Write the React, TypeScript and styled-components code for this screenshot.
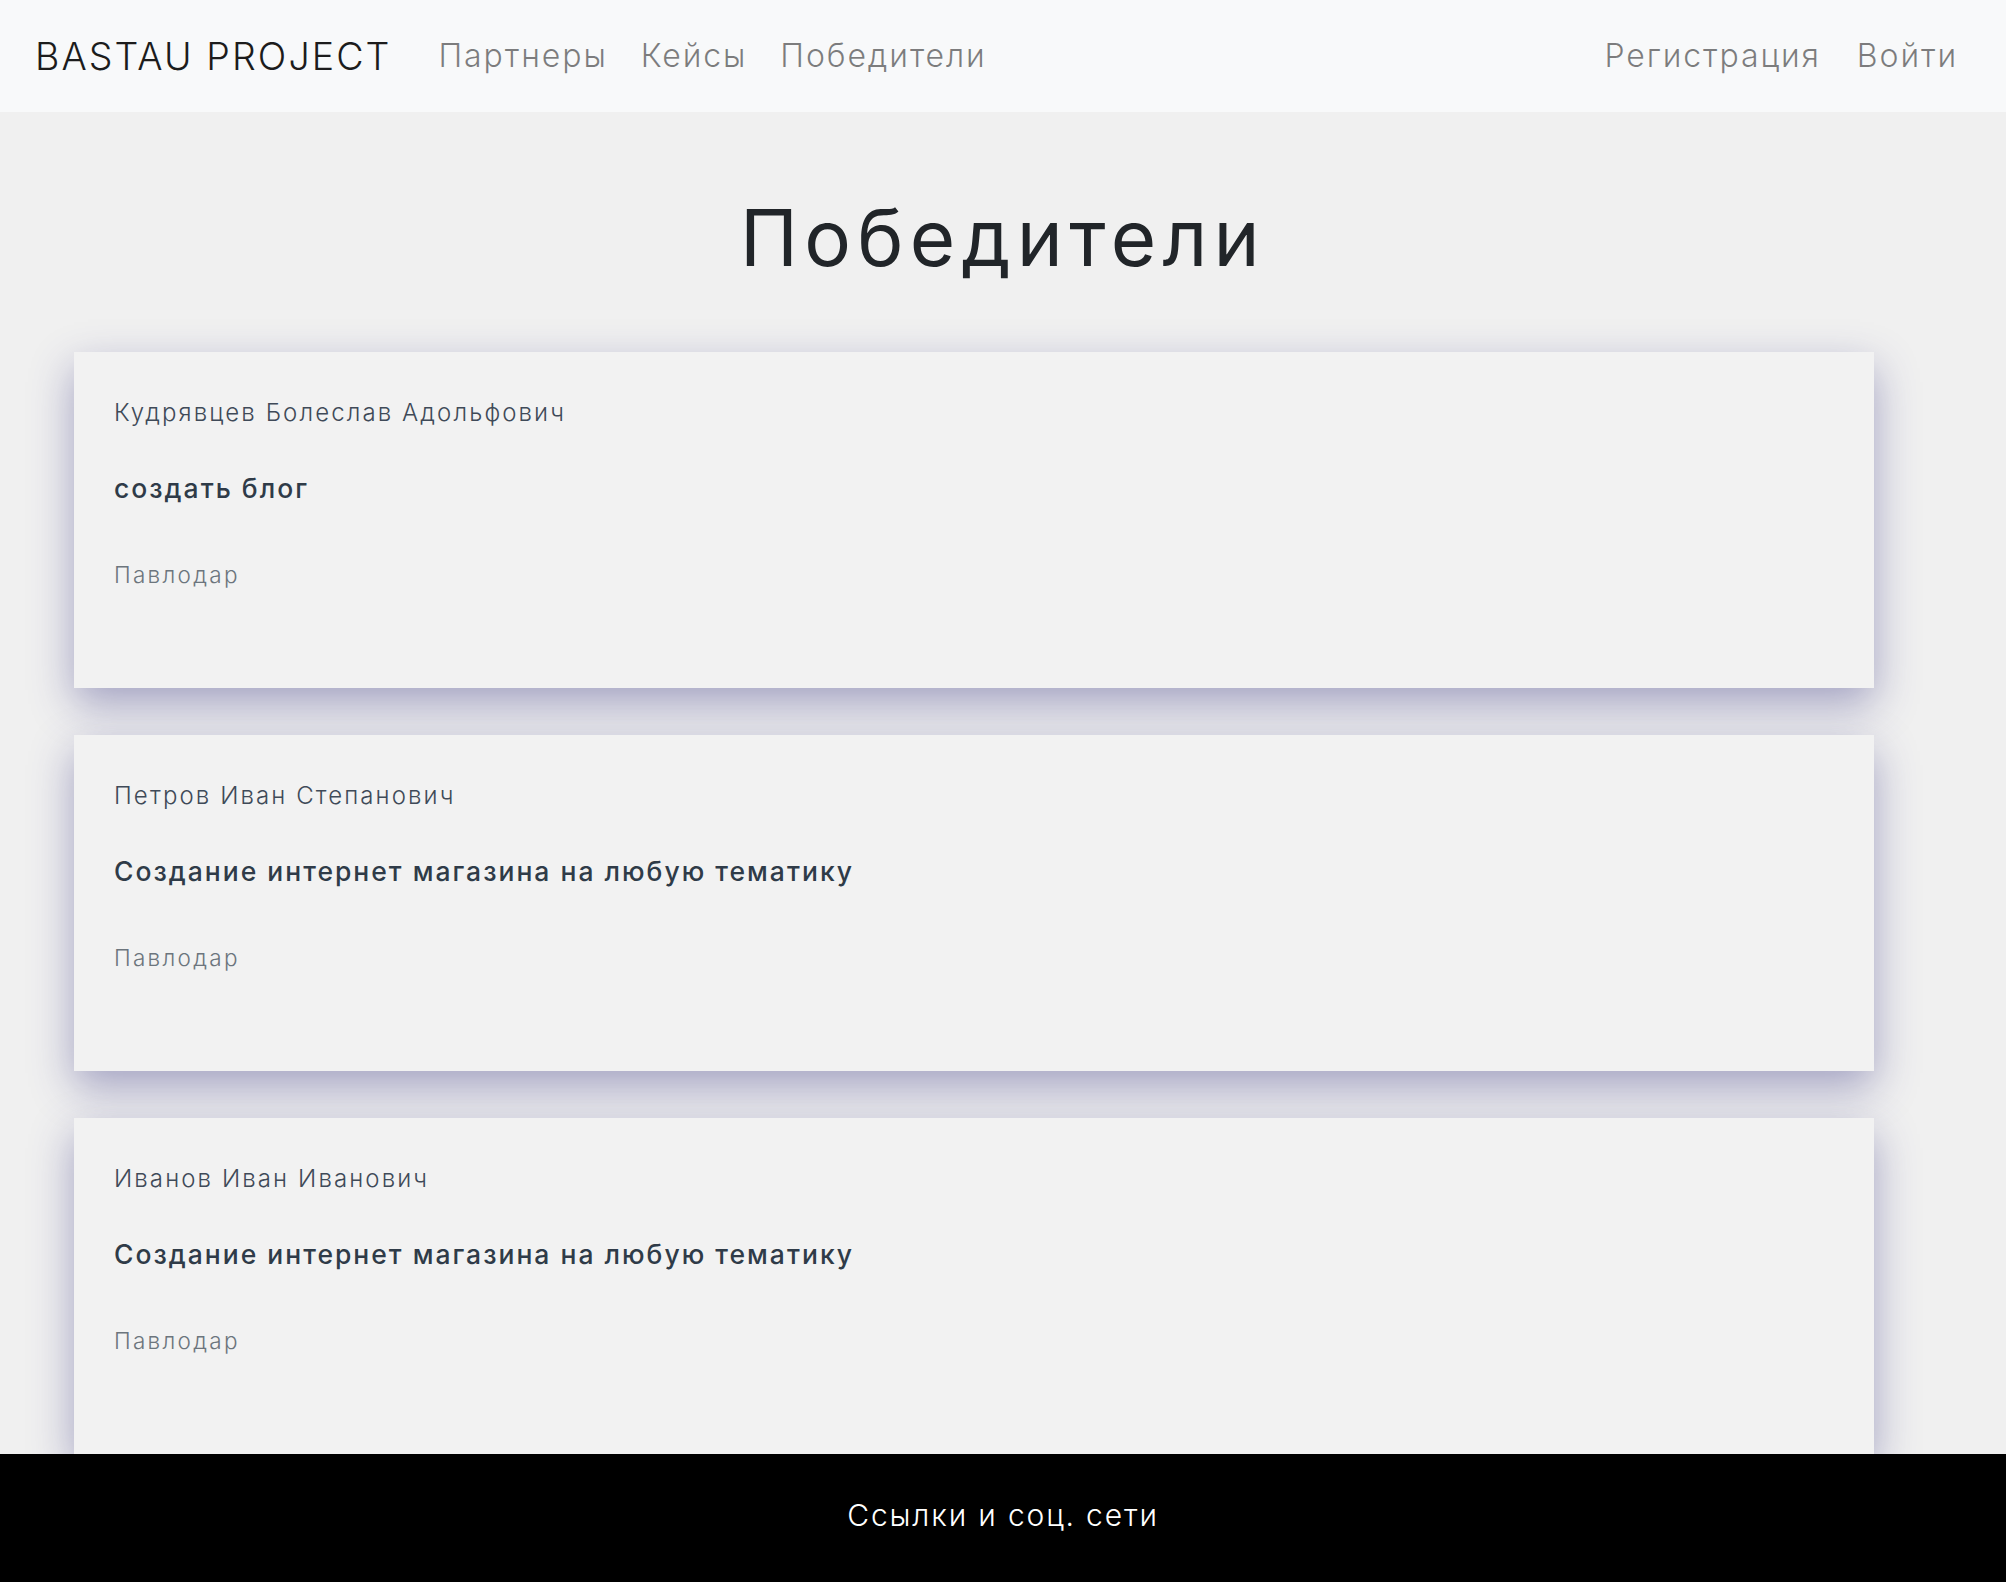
import React from "react";
import styled, { createGlobalStyle } from "styled-components";

const GlobalStyle = createGlobalStyle`
  * { box-sizing: border-box; }
  html, body { margin: 0; padding: 0; }
  body {
    background: #f0f0f0;
    font-family: "Inter", "Noto Sans", "DejaVu Sans", sans-serif;
    color: #212529;
  }
`;

const Page = styled.div`
  display: flex;
  flex-direction: column;
  min-height: 100vh;
`;

const Navbar = styled.nav`
  height: 112px;
  background: #f8f9fa;
  display: flex;
  align-items: center;
  padding: 0 48px 0 35px;
`;

const Brand = styled.a`
  font-size: 37.5px;
  font-weight: 300;
  line-height: 1.2;
  color: #1c1c1c;
  letter-spacing: 2.1px;
  margin-right: 47px;
  text-decoration: none;
  white-space: nowrap;
`;

const NavGroup = styled.div<{ $push?: boolean }>`
  display: flex;
  align-items: center;
  gap: ${(p) => (p.$push ? "36px" : "33px")};
  margin-left: ${(p) => (p.$push ? "auto" : "0")};
`;

const NavLink = styled.a`
  font-size: 32px;
  font-weight: 300;
  line-height: 1.5;
  color: rgba(0, 0, 0, 0.5);
  letter-spacing: 1.9px;
  text-decoration: none;
  white-space: nowrap;
`;

const Main = styled.main`
  flex: 1;
  display: flex;
  flex-direction: column;
`;

const Heading = styled.h1`
  margin: 80px 0 68px;
  text-align: center;
  font-size: 78px;
  font-weight: 400;
  line-height: 92px;
  letter-spacing: 6.3px;
  color: #212529;
`;

const CardList = styled.div`
  display: flex;
  flex-direction: column;
  gap: 47px;
  padding-left: 74px;
`;

const Card = styled.article`
  width: 1800px;
  background: #f2f2f2;
  padding: 43px 40px 96px;
  box-shadow: 0 16px 40px rgba(58, 54, 130, 0.42);
`;

const Name = styled.div`
  font-size: 24px;
  font-weight: 300;
  line-height: 36px;
  color: #3f4a58;
  letter-spacing: 2.1px;
`;

const Task = styled.div`
  margin-top: 37px;
  font-size: 26.5px;
  font-weight: 500;
  line-height: 40px;
  color: #2f3b48;
  letter-spacing: 2px;
`;

const City = styled.div`
  margin-top: 50px;
  font-size: 22.5px;
  font-weight: 300;
  line-height: 34px;
  color: #6c757d;
  letter-spacing: 2.3px;
`;

const Footer = styled.footer`
  height: 128px;
  background: #000;
  display: flex;
  align-items: center;
  justify-content: center;
  padding-bottom: 6px;
`;

const FooterText = styled.span`
  font-size: 30px;
  font-weight: 300;
  line-height: 1.2;
  color: #fff;
  letter-spacing: 1.85px;
`;

type Winner = { name: string; task: string; city: string };

const winners: Winner[] = [
  { name: "Кудрявцев Болеслав Адольфович", task: "создать блог", city: "Павлодар" },
  { name: "Петров Иван Степанович", task: "Создание интернет магазина на любую тематику", city: "Павлодар" },
  { name: "Иванов Иван Иванович", task: "Создание интернет магазина на любую тематику", city: "Павлодар" },
];

export default function App() {
  return (
    <>
      <GlobalStyle />
      <Page>
        <Navbar>
          <Brand href="#">BASTAU PROJECT</Brand>
          <NavGroup>
            <NavLink href="#">Партнеры</NavLink>
            <NavLink href="#">Кейсы</NavLink>
            <NavLink href="#">Победители</NavLink>
          </NavGroup>
          <NavGroup $push>
            <NavLink href="#">Регистрация</NavLink>
            <NavLink href="#">Войти</NavLink>
          </NavGroup>
        </Navbar>
        <Main>
          <Heading>Победители</Heading>
          <CardList>
            {winners.map((w, i) => (
              <Card key={i}>
                <Name>{w.name}</Name>
                <Task>{w.task}</Task>
                <City>{w.city}</City>
              </Card>
            ))}
          </CardList>
        </Main>
        <Footer>
          <FooterText>Ссылки и соц. сети</FooterText>
        </Footer>
      </Page>
    </>
  );
}
